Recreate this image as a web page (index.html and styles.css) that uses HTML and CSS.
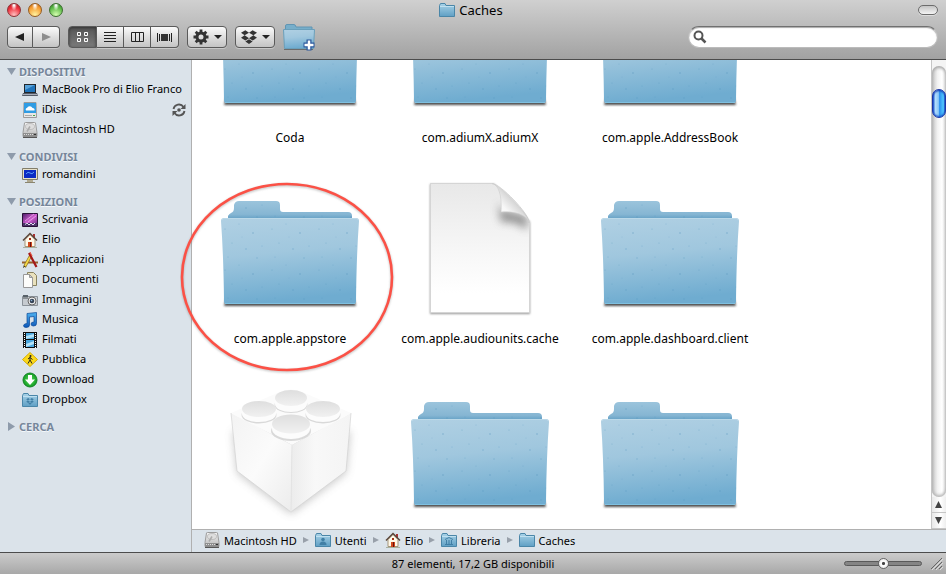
FILE: index.html
```html
<!DOCTYPE html>
<html lang="it">
<head>
<meta charset="utf-8">
<title>Caches</title>
<link rel="stylesheet" href="styles.css">
</head>
<body>
<svg class="defs" aria-hidden="true">
  <defs>
    <linearGradient id="g-front" x1="0" y1="0" x2="0.15" y2="1"><stop offset="0" stop-color="#b0d0e3"/><stop offset=".45" stop-color="#a0c7de"/><stop offset="1" stop-color="#6facd0"/></linearGradient>
    <linearGradient id="g-back" x1="0" y1="0" x2="0" y2="1"><stop offset="0" stop-color="#9bc4dc"/><stop offset=".7" stop-color="#86b6d3"/><stop offset="1" stop-color="#5d9cc2"/></linearGradient>
    <linearGradient id="g-mini" x1="0" y1="0" x2="0" y2="1"><stop offset="0" stop-color="#a9d3e8"/><stop offset="1" stop-color="#5f9fc4"/></linearGradient>
    <linearGradient id="g-doc" x1="0" y1="0" x2="0" y2="1"><stop offset="0" stop-color="#e8e8e8"/><stop offset=".5" stop-color="#f6f6f6"/><stop offset=".85" stop-color="#fff"/></linearGradient>
    <linearGradient id="g-curl" x1="0" y1="1" x2=".6" y2=".4"><stop offset="0" stop-color="#fff"/><stop offset=".6" stop-color="#f7f7f7"/><stop offset="1" stop-color="#d0d0d0"/></linearGradient>
    <linearGradient id="g-left" x1="0" y1="0" x2="1" y2="1"><stop offset="0" stop-color="#f3f3f3"/><stop offset=".5" stop-color="#fbfbfb"/><stop offset="1" stop-color="#ececec"/></linearGradient>
    <linearGradient id="g-right" x1="0" y1="0" x2="1" y2="0"><stop offset="0" stop-color="#ececec"/><stop offset=".4" stop-color="#f8f8f8"/><stop offset="1" stop-color="#f4f4f4"/></linearGradient>
    <linearGradient id="g-stud" x1="0" y1="0" x2="0" y2="1"><stop offset="0" stop-color="#dedede"/><stop offset="1" stop-color="#f1f1f1"/></linearGradient>
    <linearGradient id="g-desk" x1="0" y1="0" x2="1" y2="1"><stop offset="0" stop-color="#4a1a68"/><stop offset=".5" stop-color="#d060cf"/><stop offset="1" stop-color="#5c2078"/></linearGradient>
    <linearGradient id="g-note" x1="0" y1="0" x2="0" y2="1"><stop offset="0" stop-color="#4fb2f0"/><stop offset="1" stop-color="#0b57b8"/></linearGradient>
    <linearGradient id="g-hd" x1="0" y1="0" x2="0" y2="1"><stop offset="0" stop-color="#f4f4f4"/><stop offset="1" stop-color="#b8b8b8"/></linearGradient>
    <radialGradient id="g-green"><stop offset="0" stop-color="#5be05b"/><stop offset="1" stop-color="#129b23"/></radialGradient>
    <filter id="f-soft" x="-20%" y="-20%" width="140%" height="140%"><feGaussianBlur stdDeviation="1"/></filter>
    <filter id="f-wide" x="-30%" y="-30%" width="160%" height="160%"><feGaussianBlur stdDeviation="4"/></filter>
    <pattern id="p-speck" width="47" height="41" patternUnits="userSpaceOnUse">
      <g fill="#4b8fb8"><circle cx="5" cy="8" r=".6" opacity=".5"/><circle cx="19" cy="3" r=".5" opacity=".4"/><circle cx="33" cy="12" r=".7" opacity=".6"/><circle cx="42" cy="25" r=".5" opacity=".5"/><circle cx="12" cy="22" r=".6" opacity=".4"/><circle cx="26" cy="28" r=".7" opacity=".5"/><circle cx="8" cy="36" r=".5" opacity=".5"/><circle cx="37" cy="37" r=".7" opacity=".4"/><circle cx="22" cy="16" r=".4" opacity=".5"/></g>
    </pattern>
    <clipPath id="c-doc"><path d="M21 3H82C89 3 119 34 119 42V132H21Z"/></clipPath>

    <symbol id="folder" viewBox="0 0 140 140">
      <path d="M6 118H134L136 126H4Z" fill="#222" filter="url(#f-soft)" opacity=".8"/>
      <path d="M8 40V36Q9 34 11 33Q14 32 14 28V25Q15 21 19 21H56Q60 21 60 25V29Q60 32 63 32H128Q132 32 132 36V40Z" fill="url(#g-back)"/>
      <path d="M8 40V36Q9 34 11 33Q14 32 14 28V25Q15 21 19 21H56Q60 21 60 25V29Q60 32 63 32H128Q132 32 132 36V40Z" fill="url(#p-speck)"/>
      <path d="M1 41Q1 38 4 38H136Q139 38 139 41Q136.500 75 136 121Q136 124 134 124H6Q4 124 4 121Q3.500 75 1 41Z" fill="url(#g-front)"/>
      <path d="M1 41Q1 38 4 38H136Q139 38 139 41Q136.500 75 136 121Q136 124 134 124H6Q4 124 4 121Q3.500 75 1 41Z" fill="url(#p-speck)"/>
      <path d="M2 40Q3 38.500 4 38.500H136Q138 38.500 138 40" fill="none" stroke="#bedbea" opacity=".8"/>
      <path d="M5 123.500H135" stroke="#7fc0e0"/>
    </symbol>
    <symbol id="document" viewBox="0 0 140 140">
      <path d="M20 4H84L120 42V134H20Z" fill="#555" filter="url(#f-soft)" opacity=".6"/>
      <path d="M20.500 3.500H82C90 3.500 119.500 34 119.500 43V132.500H20.500Z" fill="url(#g-doc)" stroke="#d5d5d5"/>
      <g clip-path="url(#c-doc)"><path d="M88 22L91 42Q106 40 117 50V36L92 30Z" fill="#666" filter="url(#f-wide)" opacity=".7"/></g>
      <path d="M82 3.500C90 5 92 20 91 32C104 31 116 34 119.500 43C117 33 90 5 82 3.500Z" fill="url(#g-curl)" stroke="#ccc" stroke-width=".6"/>
    </symbol>
    <symbol id="brick" viewBox="0 0 140 140">
      <path d="M13 50L17 92L71 133L126 92L130 50Z" fill="#888" filter="url(#f-wide)" opacity=".45"/>
      <path d="M11 32L72 64L71 131L17 90Z" fill="url(#g-left)"/>
      <path d="M131 32L72 64L71 131L126 90Z" fill="url(#g-right)"/>
      <path d="M11 32L62 10Q71 7 80 10L131 32L72 64Z" fill="#fbfbfb"/>
      <path d="M11 32L17 90L71 131L126 90L131 32" fill="none" stroke="#d2d2d2" stroke-width=".7"/>
      <path d="M72 64L71 131" stroke="#e4e4e4"/>
      <g fill="#d9d9d9"><ellipse cx="71" cy="24" rx="16.500" ry="8"/><ellipse cx="39" cy="34" rx="17.500" ry="8.500"/><ellipse cx="103" cy="34" rx="17.500" ry="8.500"/><ellipse cx="71" cy="50" rx="20" ry="10"/></g>
      <g fill="#fcfcfc"><path d="M55 17V23A16 8 0 0 0 87 23V17Z"/><path d="M22 28V33A17 8 0 0 0 56 33V28Z"/><path d="M86 28V33A17 8 0 0 0 120 33V28Z"/><path d="M52 43V48A19 10 0 0 0 90 48V43Z"/></g>
      <g fill="url(#g-stud)"><ellipse cx="71" cy="17" rx="16" ry="8"/><ellipse cx="39" cy="28" rx="17" ry="8"/><ellipse cx="103" cy="28" rx="17" ry="8"/><ellipse cx="71" cy="43" rx="19" ry="9.500"/></g>
    </symbol>

    <symbol id="mini" viewBox="0 0 16 16">
      <path d="M.5 14.500V3.500L1.500 1.500H6L7 3.500H15.500V14.500Z" fill="url(#g-mini)" stroke="#4a86a8"/>
      <path d="M1 4.500H15" stroke="#c0e0f0"/>
    </symbol>
    <symbol id="hd" viewBox="0 0 16 16">
      <path d="M2.500 1Q2.500 .5 3.500 .5H12.500Q13.500 .5 13.500 1L15 10.500V14.500H1V10.500Z" fill="url(#g-hd)" stroke="#9c9c9c"/>
      <path d="M1 11H15V15H1Z" fill="#8e8e8e"/><ellipse cx="8" cy="4.500" rx="4.500" ry="3" fill="#dedede" stroke="#b5b5b5" stroke-width=".8"/><path d="M8 4.500L5 9.500" stroke="#aaa" stroke-width="1.500"/><path d="M2 12.500H11" stroke="#ddd" stroke-dasharray="1 1"/><path d="M12 12.500H14" stroke="#333"/><path d="M1 15.500H15" stroke="#555"/>
    </symbol>
    <symbol id="house" viewBox="0 0 16 16">
      <path d="M11 2H13V6H11Z" fill="#a33"/><path d="M3 7.500L8 2.500L13 7.500V14.500H3Z" fill="#fff8e8" stroke="#a5957a"/>
      <path d="M1 8.500L8 1.500L15 8.500" fill="none" stroke="#5b473a" stroke-width="1.500"/><path d="M6 10H10V15H6Z" fill="#d0481c"/><path d="M8.500 10V15" stroke="#611"/><path d="M7 6H9V8H7Z" fill="#a53116"/><path d="M1 15.500H15" stroke="#a8b0a0"/>
    </symbol>
    <symbol id="laptop" viewBox="0 0 16 16">
      <path d="M2 2H14V11H2Z" fill="#20262c"/><path d="M3 3H13V10H3Z" fill="#1f73ba"/><path d="M3 3H13L3 8Z" fill="#6fb7e8" opacity=".7"/><path d="M1 11H15L16 14H0Z" fill="#555b66"/><path d="M1 12.500H15" stroke="#a8aebb"/>
    </symbol>
    <symbol id="idisk" viewBox="0 0 16 16">
      <path d="M2 .5H14L14.500 15.500H1.500Z" fill="#e8e8e8" stroke="#9a9a9a"/><path d="M2 1H14V11H2Z" fill="#2f9ce4"/><path d="M4 8.500Q3 6.500 5 6Q6 3.500 9 4.500Q10 5 10.500 6Q13 6 12.500 8.500Z" fill="#fff"/><path d="M3 13.500H10" stroke="#aaa"/><path d="M11 13.500H13" stroke="#4a4"/>
    </symbol>
    <symbol id="monitor" viewBox="0 0 16 16">
      <path d="M.5 1.500H15.500V12.500H.5Z" fill="#e9e2c8" stroke="#827e6b"/><path d="M2 3H14V11H2Z" fill="#0b2cc4"/><path d="M4 7Q6 4 8 6T12 5" stroke="#5b9df8" fill="none"/><path d="M5 13H11V15H5Z" fill="#b1aa91"/><path d="M3 15.500H13" stroke="#8a856f"/>
    </symbol>
    <symbol id="desktop" viewBox="0 0 16 16">
      <path d="M.5 1.500H15.500V14.500H.5Z" fill="url(#g-desk)" stroke="#2a1238"/><path d="M3 9L12 2M6 10L14 4" stroke="#f6b6f6" opacity=".7"/><path d="M1 11H15V14H1Z" fill="#4c3468"/><path d="M3 12.500L5 11L7 13L9 11L11 13L13 11" stroke="#e5ddf2" fill="none"/>
    </symbol>
    <symbol id="apps" viewBox="0 0 16 16">
      <path d="M0 10.500H16" stroke="#97602d" stroke-width="2"/><path d="M2.500 15L9 3" stroke="#876c1d" stroke-width="3"/><path d="M3 14L9 3" stroke="#f4d748" stroke-width="1.800"/><path d="M7 1L14.500 15" stroke="#a31818" stroke-width="2.200"/><path d="M8 0L10 4" stroke="#e74b3a"/><path d="M1 15.500L3 14" stroke="#333"/>
    </symbol>
    <symbol id="docs" viewBox="0 0 16 16">
      <path d="M5.500 .5H11.500L14.500 3.500V13.500H5.500Z" fill="#e9e1bd" stroke="#89825f"/><path d="M1.500 2.500H7.500L10.500 5.500V15.500H1.500Z" fill="#fdfdfb" stroke="#999"/><path d="M7.500 2.500V5.500H10.500Z" fill="#ccc" stroke="#999"/>
    </symbol>
    <symbol id="camera" viewBox="0 0 16 16">
      <path d="M.5 4.500H15.500V13.500H.5Z" fill="#c6cbd0" stroke="#8b9299"/><path d="M1 3H6V5H1Z" fill="#59626a"/><path d="M1 6H6" stroke="#51565b"/><circle cx="10" cy="9" r="4" fill="#eee" stroke="#666"/><circle cx="10" cy="9" r="2.300" fill="#354355"/><circle cx="9.500" cy="8.500" r=".8" fill="#8fb5dc"/>
    </symbol>
    <symbol id="music" viewBox="0 0 16 16">
      <path d="M5 1.500L14.500 .5V11.500Q14.500 14 11.500 14Q9 14 9 12Q9 10 12 10V4.500L7.500 5V13Q7.500 15.500 4 15.500Q1.500 15.500 1.500 13.500Q2 11.500 5 11.500Z" fill="url(#g-note)" stroke="#0c4896" stroke-width=".7"/>
    </symbol>
    <symbol id="film" viewBox="0 0 16 16">
      <path d="M1 0H15V16H1Z" fill="#111"/><path d="M4 1H12V7H4ZM4 8H12V15H4Z" fill="#4aa7df"/><path d="M4 4L12 2V5L4 7ZM4 12L12 9V12L4 15Z" fill="#b4e2f8"/><path d="M2.500 1V16M13.500 1V16" stroke="#fff" stroke-dasharray="1 1"/>
    </symbol>
    <symbol id="public" viewBox="0 0 16 16">
      <path d="M8 .5L15.500 7.500L8 14.500L.5 7.500Z" fill="#fbd91a" stroke="#d6ac08"/><circle cx="8.500" cy="4" r="1" fill="#222"/><path d="M8 5V8L6 11.500M8 8L10 11.500M6 7L8 5.500L10.500 7.500" fill="none" stroke="#222"/>
    </symbol>
    <symbol id="download" viewBox="0 0 16 16">
      <circle cx="8" cy="8" r="7" fill="url(#g-green)" stroke="#158526"/><path d="M6 3H10V7.500H13L8 13L3 7.500H6Z" fill="#fff"/>
    </symbol>
    <symbol id="box" viewBox="0 0 22 20">
      <path d="M6 0L11 3.500L5 7L0 3.500ZM16 0L22 3.500L17 7L11 3.500ZM0 10.500L5 7L11 11L6 14ZM22 10.500L17 7L11 11L16 14ZM6 15.500L11 12.500L16 15.500L11 19Z"/>
    </symbol>
    <symbol id="sep" viewBox="0 0 6 8"><path d="M0 1L6 4L0 7Z" fill="#98a0aa"/></symbol>
  </defs>
</svg>

<div class="window">
  <header class="chrome">
    <div class="titlebar">
      <div class="lights">
        <button class="light red" aria-label="Chiudi"></button>
        <button class="light amber" aria-label="Contrai"></button>
        <button class="light green" aria-label="Ridimensiona"></button>
      </div>
      <h1 class="title"><svg class="icon"><use href="#mini"/></svg>Caches</h1>
      <button class="pill" aria-label="Barra strumenti"></button>
    </div>
    <div class="toolbar">
      <div class="group">
        <button class="tool nav" aria-label="Indietro"><svg width="10" height="10"><path d="M9 1V9L0 5Z" fill="#222"/></svg></button>
        <button class="tool nav" aria-label="Avanti"><svg width="10" height="10"><path d="M1 1V9L10 5Z" fill="#8d8d8d"/></svg></button>
      </div>
      <div class="group views">
        <button class="tool active" aria-label="Icone"><svg width="13" height="12" fill="none" stroke="#fff"><path d="M1.500 1.500H4.500V4.500H1.500ZM8.500 1.500H11.500V4.500H8.500ZM1.500 7.500H4.500V10.500H1.500ZM8.500 7.500H11.500V10.500H8.500Z"/></svg></button>
        <button class="tool" aria-label="Elenco"><svg width="12" height="11" stroke="#222"><path d="M0 .5H12M0 3.500H12M0 6.500H12M0 9.500H12"/></svg></button>
        <button class="tool" aria-label="Colonne"><svg width="13" height="11" fill="none" stroke="#222"><path d="M.5 .5H12.500V9.500H.5ZM4.500 .5V10M8.500 .5V10"/></svg></button>
        <button class="tool" aria-label="Cover Flow"><svg width="15" height="9" stroke="#222"><path d="M4 1H11V8H4Z" fill="#333" stroke="none"/><path d="M.5 0V9M2.500 1V8M12.500 1V8M14.500 0V9"/></svg></button>
      </div>
      <button class="tool menu" aria-label="Azioni">
        <svg width="16" height="16" viewBox="-8 -8 16 16"><circle r="4" fill="none" stroke="#333" stroke-width="3"/><path d="M0 -7.500V-4M0 4V7.500M-7.500 0H-4M4 0H7.500M-5.300 -5.300L-3 -3M3 3L5.300 5.300M-5.300 5.300L-3 3M3 -3L5.300 -5.300" stroke="#333" stroke-width="2.800"/></svg>
        <svg width="8" height="5"><path d="M0 0H8L4 4Z" fill="#222"/></svg>
      </button>
      <button class="tool menu" aria-label="Dropbox">
        <svg width="16" height="15" fill="#333"><use href="#box"/></svg>
        <svg width="8" height="5"><path d="M0 0H8L4 4Z" fill="#222"/></svg>
      </button>
      <button class="newfolder" aria-label="Nuova cartella">
        <svg width="32" height="28"><path d="M2.500 4V2Q2.500 .5 4 .5H11Q12.500 .5 13 3H29V7H2.500Z" fill="#77aeca" stroke="#6095b3"/><path d="M.5 5.500H31.500L30.500 24.500H1.500Z" fill="url(#g-front)" stroke="#6a9fba"/><path d="M1 25.500H30" stroke="#444" opacity=".6"/><path d="M26 15.500V26.500M20.500 21H31.500" stroke="#2b579c" stroke-width="5"/><path d="M26 16.500V25.500M21.500 21H30.500" stroke="#fff" stroke-width="2.500"/></svg>
      </button>
      <label class="search">
        <svg width="14" height="14" fill="none" stroke="#555" stroke-width="2"><circle cx="5.500" cy="5.500" r="4"/><path d="M8.500 8.500L12.500 12.500" stroke-width="2.500"/></svg>
        <input type="search" aria-label="Cerca">
      </label>
    </div>
  </header>

  <div class="body">
    <nav class="sidebar">
      <section>
        <h2><svg class="tri"><path d="M0 1H9L4.500 8Z"/></svg>DISPOSITIVI</h2>
        <a href="#"><svg class="icon"><use href="#laptop"/></svg>MacBook Pro di Elio Franco</a>
        <a href="#"><svg class="icon"><use href="#idisk"/></svg>iDisk<svg class="sync" viewBox="0 0 14 14"><path d="M1.500 6A5.500 5.500 0 0 1 11.500 4M12.500 8A5.500 5.500 0 0 1 2.500 10" fill="none" stroke="#555" stroke-width="1.800"/><path d="M13.500 1V6H8.500ZM.5 13V8H5.500Z" fill="#555"/><circle cx="7" cy="7" r="1.800" fill="#555"/></svg></a>
        <a href="#"><svg class="icon"><use href="#hd"/></svg>Macintosh HD</a>
      </section>
      <section>
        <h2><svg class="tri"><path d="M0 1H9L4.500 8Z"/></svg>CONDIVISI</h2>
        <a href="#"><svg class="icon"><use href="#monitor"/></svg>romandini</a>
      </section>
      <section>
        <h2><svg class="tri"><path d="M0 1H9L4.500 8Z"/></svg>POSIZIONI</h2>
        <a href="#"><svg class="icon"><use href="#desktop"/></svg>Scrivania</a>
        <a href="#"><svg class="icon"><use href="#house"/></svg>Elio</a>
        <a href="#"><svg class="icon"><use href="#apps"/></svg>Applicazioni</a>
        <a href="#"><svg class="icon"><use href="#docs"/></svg>Documenti</a>
        <a href="#"><svg class="icon"><use href="#camera"/></svg>Immagini</a>
        <a href="#"><svg class="icon"><use href="#music"/></svg>Musica</a>
        <a href="#"><svg class="icon"><use href="#film"/></svg>Filmati</a>
        <a href="#"><svg class="icon"><use href="#public"/></svg>Pubblica</a>
        <a href="#"><svg class="icon"><use href="#download"/></svg>Download</a>
        <a href="#"><svg class="icon" viewBox="0 0 16 16"><use href="#mini"/><use href="#box" x="4" y="6" width="8" height="7" fill="#417fa5"/></svg>Dropbox</a>
      </section>
      <section>
        <h2><svg class="tri"><path d="M1 0V9L8 4.500Z"/></svg>CERCA</h2>
      </section>
    </nav>

    <main class="content">
      <div class="pane">
        <div class="viewport">
          <ul class="files">
            <li><svg class="big"><use href="#folder"/></svg><span>Coda</span></li>
            <li><svg class="big"><use href="#folder"/></svg><span>com.adiumX.adiumX</span></li>
            <li><svg class="big"><use href="#folder"/></svg><span>com.apple.AddressBook</span></li>
            <li><svg class="big"><use href="#folder"/></svg><span>com.apple.appstore</span></li>
            <li><svg class="big"><use href="#document"/></svg><span>com.apple.audiounits.cache</span></li>
            <li><svg class="big"><use href="#folder"/></svg><span>com.apple.dashboard.client</span></li>
            <li><svg class="big"><use href="#brick"/></svg></li>
            <li><svg class="big"><use href="#folder"/></svg></li>
            <li><svg class="big"><use href="#folder"/></svg></li>
          </ul>
        </div>
        <div class="scrollbar">
          <div class="track"><div class="thumb"></div></div>
          <button class="arrow" aria-label="Su"><svg width="8" height="8"><path d="M0 7H7L3.500 0Z" fill="#444"/></svg></button>
          <button class="arrow" aria-label="Giù"><svg width="8" height="8"><path d="M0 0H7L3.500 7Z" fill="#444"/></svg></button>
        </div>
      </div>
      <nav class="path">
        <a href="#"><svg class="icon"><use href="#hd"/></svg>Macintosh HD</a>
        <svg class="sep"><use href="#sep"/></svg>
        <a href="#"><svg class="icon" viewBox="0 0 16 16"><use href="#mini"/><circle cx="8" cy="7.500" r="1.800" fill="#417fa5"/><path d="M4.500 13Q4.500 9.500 8 9.500T11.500 13Z" fill="#417fa5"/></svg>Utenti</a>
        <svg class="sep"><use href="#sep"/></svg>
        <a href="#"><svg class="icon"><use href="#house"/></svg>Elio</a>
        <svg class="sep"><use href="#sep"/></svg>
        <a href="#"><svg class="icon" viewBox="0 0 16 16"><use href="#mini"/><path d="M4 7.500L8 5.500L12 7.500M4 12.500H12M5.500 8V12M8 8V12M10.500 8V12" stroke="#417fa5" fill="none"/></svg>Libreria</a>
        <svg class="sep"><use href="#sep"/></svg>
        <a href="#"><svg class="icon"><use href="#mini"/></svg>Caches</a>
      </nav>
    </main>

    <svg class="highlight" viewBox="0 0 216 194" aria-hidden="true"><ellipse cx="107" cy="97" rx="105" ry="93" fill="none" stroke="#777" stroke-width="3" opacity=".4" filter="url(#f-soft)"/><ellipse cx="107" cy="96" rx="105" ry="93" fill="none" stroke="#fb5146" stroke-width="2.600"/></svg>
  </div>

  <footer class="status">
    <p>87 elementi, 17,2 GB disponibili</p>
    <div class="size">
      <input type="range" min="0" max="100" value="51" aria-label="Dimensione icone">
      <svg class="grip" width="13" height="13"><path d="M1 12L12 1M5 12L12 5M9 12L12 9" stroke="#666"/><path d="M2 13L13 2M6 13L13 6M10 13L13 10" stroke="#ddd"/></svg>
    </div>
  </footer>
</div>
</body>
</html>
```
FILE: styles.css
```css
* { box-sizing: border-box; }
body, h1, h2, p, ul { margin: 0; padding: 0; }
body {
  font-family: "Noto Sans", "Open Sans", sans-serif;
  font-size: 11px;
  color: #000;
}
svg { display: block; flex: none; }
a { color: inherit; text-decoration: none; }
button { margin: 0; padding: 0; font: inherit; }
.defs { position: absolute; width: 0; height: 0; }
.icon { width: 16px; height: 16px; }

.window { display: flex; flex-direction: column; height: 100vh; }

.chrome {
  flex: none;
  height: 60px;
  background: linear-gradient(#d0d0d0, #a2a2a2);
  border-bottom: 1px solid #4c4c4c;
}
.titlebar {
  display: grid;
  grid-template-columns: 1fr auto 1fr;
  align-items: center;
  height: 20px;
  padding: 0 8px 0 7px;
}
.lights { display: flex; gap: 7px; }
.light {
  width: 14px;
  height: 14px;
  border: 1px solid;
  border-radius: 50%;
}
.red { border-color: #8d3236; background: radial-gradient(ellipse at 50% 10%, #fff 5%, transparent 35%), radial-gradient(circle at 50% 90%, #ffc0c0, #f0303c 60%, #a81820); }
.amber { border-color: #945c22; background: radial-gradient(ellipse at 50% 10%, #fff 5%, transparent 35%), radial-gradient(circle at 50% 90%, #fff3a0, #f59a2e 65%, #b05c10); }
.green { border-color: #3c6d30; background: radial-gradient(ellipse at 50% 10%, #fff 5%, transparent 35%), radial-gradient(circle at 50% 90%, #d5ffb0, #58b743 65%, #2d7424); }
.title {
  display: flex;
  align-items: center;
  gap: 4px;
  padding-right: 3px;
  font-size: 13px;
  font-weight: 400;
  line-height: 20px;
}
.pill {
  justify-self: end;
  width: 20px;
  height: 10px;
  border: 1px solid #6c6c6c;
  border-radius: 5px;
  background: linear-gradient(#c4c4c4, #f4f4f4);
  box-shadow: 0 1px 0 #ddd;
}

.toolbar { display: flex; align-items: center; gap: 8px; height: 34px; padding: 0 8px 0 7px; }
.group { display: flex; }
.tool {
  display: flex;
  align-items: center;
  justify-content: center;
  height: 22px;
  border: 1px solid #5a5a5a;
  border-radius: 4px;
  background: linear-gradient(#fbfbfb, #dedede 50%, #c4c4c4);
  box-shadow: 0 1px 0 #c8c8c8;
}
.group .tool { border-radius: 0; }
.group .tool + .tool { border-left: 0; }
.group .tool:first-child { border-radius: 4px 0 0 4px; }
.group .tool:last-child { border-radius: 0 4px 4px 0; }
.nav { width: 27px; }
.nav:first-child { width: 26px; }
.views { display: grid; grid-template-columns: 29px 27px 27px 28px; }
.tool.active { background: linear-gradient(#565656, #7b7b7b); box-shadow: inset 0 1px 3px #333; }
.menu { gap: 5px; width: 40px; }
.newfolder { padding-top: 2px; border: 0; background: none; }
.search {
  display: flex;
  align-items: center;
  gap: 4px;
  width: 250px;
  height: 22px;
  margin-left: auto;
  padding: 0 8px 0 4px;
  border: 1px solid #bbb;
  border-top-color: #707070;
  border-radius: 11px;
  background: #fff;
  box-shadow: inset 0 1px 1px #aaa;
}
.search input { flex: 1; min-width: 0; border: 0; padding: 0; outline: 0; background: none; font: inherit; }

.body { position: relative; display: flex; flex: 1; min-height: 0; }
.sidebar {
  display: flex;
  flex-direction: column;
  gap: 9px;
  flex: none;
  width: 192px;
  padding-top: 4px;
  overflow: hidden;
  border-right: 1px solid #b0b0b0;
  background: #dbe3ea;
  white-space: nowrap;
}
.sidebar h2 {
  display: flex;
  align-items: center;
  gap: 3px;
  height: 16px;
  padding: 0 0 2px 7px;
  font-size: 11px;
  color: #76869a;
  text-shadow: 0 1px 0 #f4f8fb;
}
.tri { width: 9px; height: 9px; fill: #8e9bab; }
.sidebar a {
  display: flex;
  gap: 4px;
  height: 20px;
  padding: 0 5px 0 22px;
  line-height: 18px;
}
.sidebar .icon { margin-top: 2px; }
.sync { width: 14px; height: 14px; margin-top: 3px; margin-left: auto; }

.content { display: flex; flex: 1; flex-direction: column; min-width: 0; background: #fff; }
.pane { display: flex; flex: 1; min-height: 0; }
.viewport { flex: 1; overflow: hidden; }
.files {
  display: grid;
  grid-template-columns: repeat(auto-fill, 190px);
  grid-auto-rows: 201px;
  margin-top: -81px;
  padding-left: 3px;
  list-style: none;
}
.files li {
  display: flex;
  flex-direction: column;
  align-items: center;
  gap: 10px;
  font-size: 12px;
  line-height: 18px;
}
.big { width: 140px; height: 140px; }
.scrollbar {
  display: flex;
  flex-direction: column;
  flex: none;
  width: 15px;
  border-left: 1px solid #c6c6c6;
  background: #f4f4f4;
}
.track {
  flex: 1;
  margin-top: 6px;
  padding-top: 23px;
  border-radius: 7px;
  background: linear-gradient(90deg, #c4c4c4, #f2f2f2 40%, #fff 70%, #e4e4e4);
  box-shadow: inset 0 2px 3px #aaa, inset 0 -2px 3px #bbb;
}
.thumb {
  height: 29px;
  border: 1px solid #1b36a8;
  border-radius: 7px;
  background: linear-gradient(90deg, #2b62d8, #b4defc 20%, #8cc8f8 45%, #2a90f0 55%, #58d0ff 90%, #1c50c0);
  box-shadow: inset 0 1px 2px #1238b0, inset 0 -1px 2px #1a5cd0;
}
.arrow {
  display: flex;
  align-items: center;
  justify-content: center;
  height: 16px;
  border: 0;
  border-bottom: 1px solid #c6c6c6;
  background: linear-gradient(90deg, #e8e8e8, #fff 60%, #eee);
}
.path {
  display: flex;
  align-items: center;
  gap: 6px;
  flex: none;
  height: 23px;
  padding: 0 0 2px 12px;
  border-top: 1px solid #b0b0b0;
  background: #dbe3ea;
}
.path a { display: flex; align-items: center; gap: 4px; }
.sep { width: 6px; height: 8px; }
.highlight { position: absolute; top: 121px; left: 180px; width: 216px; height: 194px; pointer-events: none; }

.status {
  display: grid;
  grid-template-columns: 1fr auto 1fr;
  align-items: center;
  flex: none;
  height: 22px;
  padding-right: 3px;
  padding-left: 3px;
  border-top: 1px solid #4c4c4c;
  background: linear-gradient(#cbcbcb, #a8a8a8);
}
.status p { grid-column: 2; }
.size { display: flex; align-items: center; justify-content: flex-end; gap: 8px; }
input[type="range"] { width: 78px; height: 12px; margin: 0; appearance: none; background: none; }
input[type="range"]::-webkit-slider-runnable-track {
  height: 5px;
  border: 1px solid #5a5a5a;
  border-radius: 3px;
  background: #858585;
}
input[type="range"]::-webkit-slider-thumb {
  appearance: none;
  width: 11px;
  height: 11px;
  margin-top: -4px;
  border: 1px solid #666;
  border-radius: 50%;
  background: radial-gradient(circle, #444 18%, #fff 32%, #ddd);
}
```
